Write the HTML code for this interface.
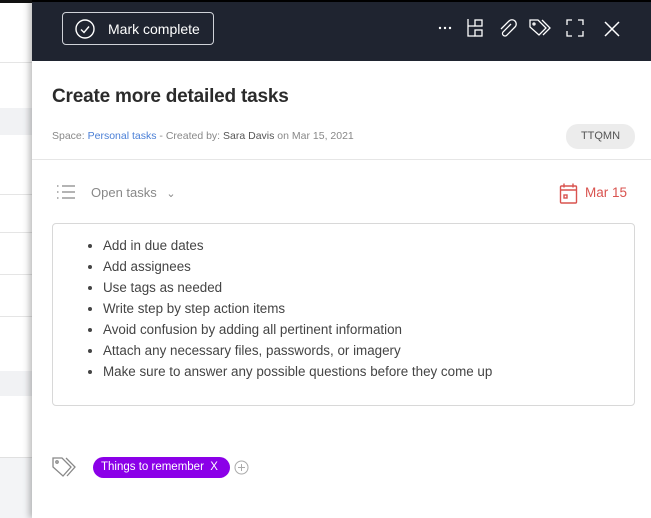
<!DOCTYPE html>
<html><head><style>
*{margin:0;padding:0;box-sizing:border-box}
body{width:651px;height:518px;overflow:hidden;background:#fff;font-family:"Liberation Sans",sans-serif;position:relative}
.left{position:absolute;left:0;top:0;width:32px;height:518px;background:#fff}
.left div{position:absolute;left:0;width:32px}
.panel{position:absolute;left:32px;top:0;width:619px;height:518px;background:#fff;box-shadow:-3px 0 6px rgba(0,0,0,.25)}
.hdr{height:61px;background:#1f2430;border-top:2px solid #000;position:relative}
.mc{position:absolute;left:30px;top:10px;width:152px;height:33px;border:1px solid #cfd2d8;border-radius:4px;color:#fff;font-size:14px}
.mc span{position:absolute;left:45px;top:8px}
.ic{position:absolute}
h1{position:absolute;left:20px;top:86px;font-size:19px;font-weight:bold;color:#2b2b2b;letter-spacing:-.2px}
.meta{position:absolute;left:20px;top:130px;font-size:10.5px;color:#888}
.meta a{color:#4a7fd6;text-decoration:none}.meta b{font-weight:normal;color:#555}
.badge{position:absolute;left:534px;top:124px;width:69px;height:25px;border-radius:12px;background:#ececec;color:#555;font-size:11px;text-align:center;line-height:25px}
.sep{position:absolute;left:0;right:0;top:159px;border-top:1px solid #e6e6e6}
.ot{position:absolute;left:59px;top:185px;font-size:13px;color:#888}
.date{position:absolute;left:553px;top:185px;font-size:13.5px;color:#d9534f}
.box{position:absolute;left:20px;top:223px;width:583px;height:183px;border:1px solid #d8d8d8;border-radius:4px}
.box ul{position:absolute;left:50px;top:11px;font-size:13.4px;color:#444;line-height:21px}
.tag{position:absolute;left:61px;top:457px;height:21px;width:137px;background:#8b00e8;border-radius:11px;color:#fff;font-size:11.5px;line-height:21px;padding-left:8px}
</style></head><body>
<div class="left">
<div style="top:0;height:3px;background:#111"></div>
<div style="top:62px;height:1px;background:#e5e5e5"></div>
<div style="top:108px;height:27px;background:#f1f2f4"></div>
<div style="top:194px;height:1px;background:#e5e5e5"></div>
<div style="top:232px;height:1px;background:#e5e5e5"></div>
<div style="top:274px;height:1px;background:#e5e5e5"></div>
<div style="top:316px;height:1px;background:#e5e5e5"></div>
<div style="top:371px;height:25px;background:#f1f2f4"></div>
<div style="top:457px;height:61px;background:#f3f4f6;border-top:1px solid #e0e0e0"></div>
</div>
<div class="panel">
<div class="hdr">
<div class="mc"><svg class="ic" style="left:12px;top:6px" width="20" height="20" viewBox="0 0 20 20"><circle cx="10" cy="10" r="9" fill="none" stroke="#fff" stroke-width="1.4"/><path d="M6 10.5l3 3 5-6" fill="none" stroke="#fff" stroke-width="1.4"/></svg><span>Mark complete</span></div>
<svg class="ic" style="left:405px;top:16px" width="16" height="20" viewBox="0 0 16 20" fill="#fff"><circle cx="3" cy="10" r="1.2"/><circle cx="8" cy="10" r="1.2"/><circle cx="13" cy="10" r="1.2"/></svg>
<svg class="ic" style="left:434px;top:16px" width="20" height="20" viewBox="0 0 20 20" fill="none" stroke="#fff" stroke-width="1.3"><path d="M2 1v17h7M2 8h7"/><rect x="9" y="2" width="7" height="6"/><rect x="9" y="12" width="7" height="6"/></svg>
<svg class="ic" style="left:466px;top:16px" width="20" height="20" viewBox="0 0 20 20" fill="none" stroke="#fff" stroke-width="1.3"><path d="M13 6l-8 8a2.5 2.5 0 0 0 4 3l8-8a4 4 0 0 0-6-6l-8 8"/></svg>
<svg class="ic" style="left:497px;top:16px" width="24" height="20" viewBox="0 0 24 20" fill="none" stroke="#fff" stroke-width="1.3"><path d="M1 2h8l8 8-7 7-9-8z"/><path d="M13 2l8 8-7 7"/><circle cx="5" cy="6" r="1"/></svg>
<svg class="ic" style="left:533px;top:16px" width="20" height="20" viewBox="0 0 20 20" fill="none" stroke="#fff" stroke-width="1.3"><path d="M2 7V2h5M13 2h5v5M18 13v5h-5M7 18H2v-5"/></svg>
<svg class="ic" style="left:570px;top:17px" width="20" height="20" viewBox="0 0 20 20" fill="none" stroke="#fff" stroke-width="1.5"><path d="M3 3l14 14M17 3L3 17"/></svg>
</div>
<h1>Create more detailed tasks</h1>
<div class="meta">Space: <a>Personal tasks</a> - Created by: <b>Sara Davis</b> on Mar 15, 2021</div>
<div class="badge">TTQMN</div>
<div class="sep"></div>
<svg class="ic" style="left:24px;top:184px" width="20" height="16" viewBox="0 0 20 16" stroke="#888" stroke-width="1.2"><path d="M6 2h13M6 8h13M6 14h13M1 2h1.5M1 8h1.5M1 14h1.5"/></svg>
<div class="ot">Open tasks <span style="font-size:11px;margin-left:6px">&#8964;</span></div>
<svg class="ic" style="left:527px;top:183px" width="19" height="21" viewBox="0 0 19 21" fill="none" stroke="#d9534f" stroke-width="1.4"><rect x="1.5" y="3" width="16" height="17" rx="1"/><path d="M1.5 7h16M5 0.5v4M14 0.5v4"/><rect x="5" y="12" width="3" height="3"/></svg>
<div class="date">Mar 15</div>
<div class="box"><ul>
<li>Add in due dates</li><li>Add assignees</li><li>Use tags as needed</li><li>Write step by step action items</li><li>Avoid confusion by adding all pertinent information</li><li>Attach any necessary files, passwords, or imagery</li><li>Make sure to answer any possible questions before they come up</li></ul></div>
<svg class="ic" style="left:20px;top:456px" width="26" height="22" viewBox="0 0 26 22" fill="none" stroke="#888" stroke-width="1.3"><path d="M1 2h9l9 9-8 9-10-9z"/><path d="M14 2l9 9-8 9"/><circle cx="5" cy="6" r="1.2"/></svg>
<div class="tag">Things to remember &nbsp;X</div>
<svg class="ic" style="left:202px;top:460px" width="15" height="15" viewBox="0 0 15 15" fill="none" stroke="#aaa" stroke-width="1"><circle cx="7.5" cy="7.5" r="6.5"/><path d="M7.5 4v7M4 7.5h7"/></svg>
</div>
</body></html>
